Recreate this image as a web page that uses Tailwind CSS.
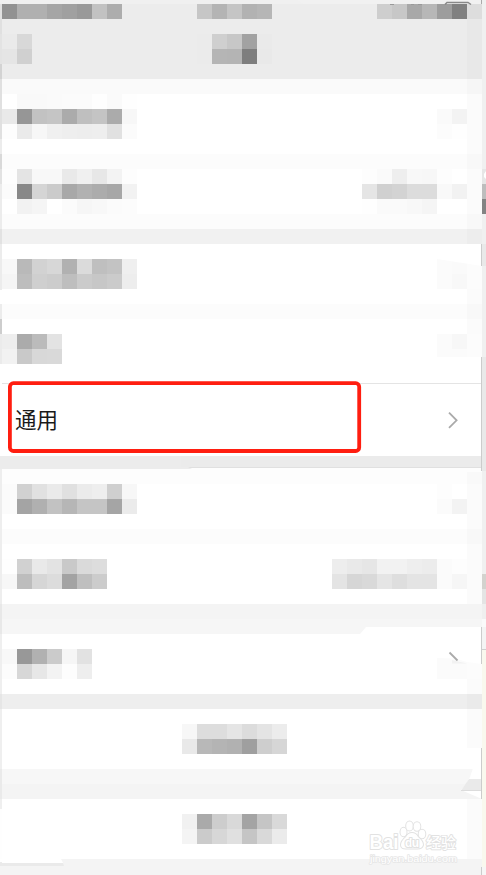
<!DOCTYPE html>
<html lang="zh-CN">
<head>
    <meta charset="UTF-8">
    <meta name="viewport" content="width=device-width, initial-scale=1.0">
    <title>设置</title>
    <script src="https://cdn.jsdelivr.net/npm/@tailwindcss/browser@4"></script>
    <script>
        // Grey levels as hex pairs, rows split by "/", ".." leaves the cell empty
        function renderMosaics() {
            document.querySelectorAll("[data-cells]").forEach(box => {
                box.dataset.cells.split("/").forEach(line => {
                    const row = document.createElement("div");
                    row.className = "flex h-[15px]";
                    line.trim().split(" ").forEach(v => {
                        const cell = document.createElement("div");
                        cell.className = "w-[15px] h-[15px]";
                        if (v !== "..") cell.style.backgroundColor = "#" + v + v + v;
                        row.appendChild(cell);
                    });
                    box.appendChild(row);
                });
            });
        }

        // Edge strips: "height:colour" pairs from top to bottom
        function renderStrips() {
            document.querySelectorAll("[data-strip]").forEach(strip => {
                strip.dataset.strip.split(" ").forEach(part => {
                    const [height, color] = part.split(":");
                    const seg = document.createElement("div");
                    seg.className = "shrink-0";
                    seg.style.height = height + "px";
                    seg.style.backgroundColor = "#" + color;
                    strip.appendChild(seg);
                });
            });
        }

        document.addEventListener("DOMContentLoaded", () => {
            renderMosaics();
            renderStrips();
        });
    </script>
</head>
<body class="relative w-[486px] h-[875px] overflow-hidden bg-white font-['Noto_Sans_CJK_SC',sans-serif]">
    <div class="flex h-[875px]">
        <div class="w-[2px] shrink-0 flex flex-col" data-strip="34:e0e0e0 30:e3e3e3 15:d3d3d3 60:e0e0e0 15:ececec 15:d9d9d9 15:e2e2e2 45:ececec 15:e2e2e2 46:ececec 14:ffffff 15:ececec 15:cdcdcd 30:ebebeb 92:ffffff 11:ebebeb 137:eeeeee 30:e8e8e8 60:efefef 15:e6e6e6 60:efefef 30:eaeaea 10:efefef 50:fefefe 3:ffffff 3:ebebeb 10:f4f4f4"></div>

        <main class="w-[480px] shrink-0 flex flex-col">
            <header class="h-[79px] shrink-0 bg-[#ececec]">
                <div class="h-1 bg-[#f1f1f1]"></div>
                <div class="flex justify-between">
                    <div data-cells="92 b0 b0 a5 a0 99 c2 ad"></div>
                    <div class="-ml-[30px]" data-cells="c6 b4 c5 b2 b6"></div>
                    <div data-cells="ce c7 a8 b7 9d 80 dd"></div>
                </div>
                <div class="flex pt-[15px]">
                    <div data-cells="ea d8/e5 d0"></div>
                    <div class="ml-[165px]" data-cells="eb cf c7 a2 ea/eb b5 b4 7e e9"></div>
                </div>
            </header>
            <div class="h-[15px] shrink-0 bg-[#fafafa]"></div>

            <section class="h-[60px] shrink-0 flex justify-between">
                <div data-cells="ff f9 f9 fa fb fb fe fa fe/e9 96 c2 c5 ab bf c4 ab f7/fd ea f7 f0 ee ed ee e1 fb"></div>
                <div class="pt-[15px]" data-cells="fa f3 ../fc fe .."></div>
            </section>
            <div class="h-[15px] shrink-0 bg-[#fcfcfc]"></div>
            <section class="h-[45px] shrink-0 flex justify-between">
                <div data-cells="fd e4 f8 f8 e9 f0 e7 f3 fd/fb 88 d5 cb a8 b1 ac a7 f2/ff f2 f5 ff fb f6 f8 fb fc"></div>
                <div data-cells="fd fa ee f8 f7 fd ff ../e5 d0 d3 dc dc f9 f2 ../fe fa fa f8 f5 ff ff .."></div>
            </section>
            <div class="h-[15px] shrink-0 bg-[#fcfcfc]"></div>
            <div class="h-[15px] shrink-0 bg-[#f1f1f1]"></div>

            <section class="h-[60px] shrink-0 flex justify-between pt-[15px]">
                <div data-cells="f8 b9 d2 d7 b1 db bf c3 ef/f5 bd cf cc be cb c7 cb ed"></div>
                <div data-cells="fb fa fc/fb f8 fc"></div>
            </section>
            <div class="h-[15px] shrink-0 bg-[#fcfcfc]"></div>
            <section class="h-[64px] shrink-0 flex justify-between pt-[15px]">
                <div data-cells="ee ab bb e3/f2 c9 d8 d9"></div>
                <div class="h-[23px] overflow-hidden" data-cells="fb f7 fc/fb fb fc"></div>
            </section>

            <section class="h-[73px] shrink-0 flex items-center justify-between border-t border-[#e4e4e4] pl-[13px] pr-[23px] pb-px">
                <span class="-mt-px text-[21.5px] leading-none text-[#1a1a1a]">通用</span>
                <svg class="w-3 h-[18px]" viewBox="0 0 12 18" fill="none" stroke="#aaa" stroke-width="1.8"><path d="M2 1.700L9.600 9.300L2 16.900"/></svg>
            </section>
            <div class="h-3 shrink-0 bg-[#ebebeb] border-b border-[#e0e0e0]"></div>
            <div class="h-4 shrink-0 bg-[#fdfdfd]"></div>

            <section class="h-[45px] shrink-0 flex justify-between">
                <div data-cells="fb d1 e1 ea e0 eb ee cf f7/fb a4 b0 c2 b6 c5 c5 a5 eb"></div>
                <div data-cells="fd ff ../fb f3 .."></div>
            </section>
            <div class="h-[15px] shrink-0 bg-[#fcfcfc]"></div>
            <section class="h-[60px] shrink-0 flex justify-between pt-[15px]">
                <div data-cells="fe d1 e9 e3 c9 da dd/f7 bd d6 dc a3 bf cc"></div>
                <div data-cells="ed e9 e6 f2 f2 ee ec fb fd ../e4 d6 d9 e5 de e4 e4 fb f6 .."></div>
            </section>
            <div class="h-[15px] shrink-0 bg-[#f4f4f4]"></div>
            <div class="h-[15px] shrink-0 bg-[#f6f6f6]"></div>

            <section class="h-[60px] shrink-0 flex justify-between pt-[15px]">
                <div data-cells="f8 98 b1 cb f6 e2/fc d7 e7 f3 fd ee"></div>
                <div class="pt-[9px] h-[30px] overflow-hidden" data-cells="fb fb fc/fb fb fc"></div>
            </section>
            <div class="h-[15px] shrink-0 bg-[#eee]"></div>

            <section class="h-[60px] shrink-0 pt-[15px] pl-[180px]">
                <div data-cells="f7 dd dd e5 dc e4 ec/e9 b8 b4 b1 9f ce d6"></div>
            </section>
            <div class="h-[15px] shrink-0 bg-[#f7f7f7]"></div>
            <div class="h-[15px] shrink-0 bg-[#f4f4f4]"></div>
            <section class="h-[60px] shrink-0 pt-[15px] pl-[180px]">
                <div data-cells="f1 aa cd d9 a4 c5 d9/f4 cb d7 e0 c5 d9 eb"></div>
            </section>
            <div class="h-4 shrink-0 bg-[#f4f4f4]"></div>
        </main>

        <div class="w-1 shrink-0 flex flex-col" data-strip="169:f0f0f0 15:e6e6e6 15:bdbdbd 15:838383 30:f0f0f0 22:e9e9e9 91:f0f0f0 114:e9e9e9 103:f0f0f0 15:d3d2ce 15:e4e4e4 15:efefef 8:fafafa 22:f4f4f4 1:cfcfcf 217:f9f8ee 8:f6f6f6"></div>
    </div>

    <!-- smudges, torn edges and thin lines over the list -->
    <svg class="absolute inset-0" width="486" height="875" viewBox="0 0 486 875" fill="none">
        <g fill="#000" fill-opacity="0.014">
            <rect x="467" y="19" width="15" height="225"/>
            <rect x="467" y="289" width="15" height="45"/>
            <rect x="467" y="472" width="15" height="132"/>
            <rect x="467" y="679" width="15" height="69"/>
            <rect x="467" y="799" width="15" height="60"/>
        </g>
        <path d="M0 0H298L303 4H0Z" fill="#f0f0f0"/>
        <path d="M390 4.500H394M411 4.500H414M418 4.500H422" stroke="#999" stroke-width="1"/>
        <path d="M445 4.500L447 2.500H468L471 4.500" stroke="#888" stroke-width="1.500"/>
        <path d="M481.500 0V4" stroke="#aaa"/>
        <path d="M484 174L486 171V179L484 177Z" fill="#fff"/>
        <path d="M437 259L482 266V244L467 250V259Z" fill="#fff"/>
        <path d="M0 456H181V467H0Z" fill="#ececec"/>
        <path d="M0 467H188L192 469H0Z" fill="#ececec"/>
        <path d="M360 634L366 627H482V664L467 662L455 658.500L437 658V634Z" fill="#fff"/>
        <path d="M449.500 652.500L457.500 660.500" stroke="#aaa" stroke-width="1.800"/>
        <path d="M452 660L467 663.500H452Z" fill="#f2f2f2"/>
        <path d="M473 748H482V799L461 790Q477 774 473 748Z" fill="#fff"/>
        <path d="M469 779H482V790.500H461Z" fill="#eaeaea"/>
        <path d="M461 790.500H482" stroke="#dcdcdc"/>
        <path d="M2 859H61L63 863H2Z" fill="#fff"/>
        <path d="M0 863H63L64 866H0Z" fill="#eaeaea"/>
        <path d="M481.500 244V266M481.500 357V471M481.500 627V664M481.500 748V799M481.500 867V875" stroke="#ccc"/>
    </svg>

    <!-- highlight round the general settings row -->
    <svg class="absolute left-2 top-[381px]" width="354" height="73" viewBox="0 0 354 73" fill="none">
        <rect x="1.900" y="2.200" width="349.300" height="67.800" rx="3.500" stroke="#ff1e10" stroke-width="3.800"/>
    </svg>

    <!-- watermark -->
    <svg class="absolute left-[364px] top-[816px]" width="100" height="52" viewBox="0 0 100 52" fill="#fff" stroke="#e2e2e2" stroke-width="2" paint-order="stroke" stroke-linejoin="round">
        <text x="5.500" y="32.500" font-family="Liberation Sans, sans-serif" font-weight="700" font-size="20" textLength="29" lengthAdjust="spacingAndGlyphs">Bai</text>
        <g stroke-width="2">
            <ellipse cx="39.500" cy="16" rx="3" ry="4.300"/>
            <ellipse cx="45.500" cy="10" rx="3.300" ry="4.600"/>
            <ellipse cx="53" cy="10.500" rx="3.300" ry="4.300"/>
            <ellipse cx="58" cy="18" rx="3.300" ry="4.300"/>
            <path d="M48 17Q52 17 54 21Q59 25 59 29Q58 33 52 32.500H43Q37 33 37 29Q37 25 42 21Q44 17 48 17Z"/>
        </g>
        <text x="41" y="31" font-family="Liberation Sans, sans-serif" font-weight="700" font-size="12" textLength="14">du</text>
        <text x="62" y="31.500" font-family="Noto Sans CJK SC, sans-serif" font-weight="500" font-size="15" stroke-width="1.800">经验</text>
        <text x="6" y="46" font-family="Liberation Sans, sans-serif" font-size="9.500" stroke-width="1.500" stroke="#e6e6e6" textLength="87" lengthAdjust="spacingAndGlyphs">jingyan.baidu.com</text>
    </svg>
</body>
</html>
